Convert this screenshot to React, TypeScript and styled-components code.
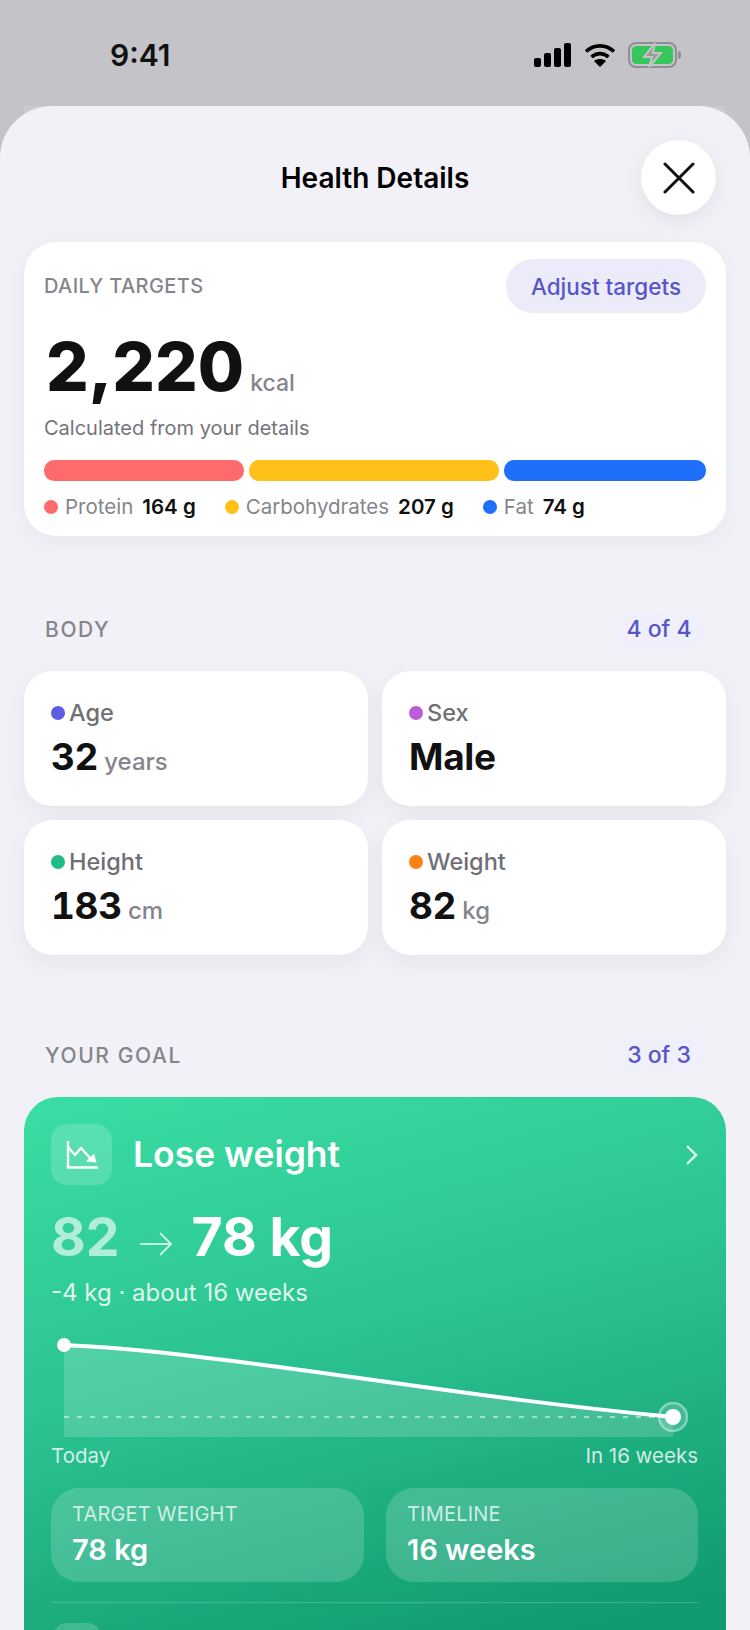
import React from "react";
import styled, { createGlobalStyle } from "styled-components";

const GlobalStyle = createGlobalStyle`
  html, body {
    margin: 0;
    padding: 0;
    background: #c4c3c8;
  }
  * {
    box-sizing: border-box;
  }
`;

const Page = styled.div`
  width: 750px;
  height: 1630px;
  overflow: hidden;
  isolation: isolate;
  background: #c4c3c8;
  font-family: Inter, "Liberation Sans", sans-serif;
  color: #111;
`;

const StatusBar = styled.div`
  height: 106px;
  padding: 36px 68px 0 110px;
  display: flex;
  justify-content: space-between;
  align-items: flex-start;
`;

const Clock = styled.div`
  font-size: 30px;
  line-height: 38px;
  font-weight: 600;
`;

const StatusIcons = styled.div`
  display: flex;
  align-items: center;
  gap: 12px;
  padding-top: 6px;
`;

const Sheet = styled.div`
  position: relative;
  height: 1524px;
  background: #f1f1f7;
  border-radius: 52px 52px 0 0;
  padding: 0 24px;

  /* the page behind the sheet peeks out at its corners */
  &::before {
    content: "";
    position: absolute;
    z-index: -1;
    top: 0;
    left: 24px;
    right: 24px;
    height: 40px;
    background: #cbcbce;
  }
`;

const SheetHeader = styled.div`
  position: relative;
  height: 136px;
  display: flex;
  align-items: center;
  justify-content: center;
  padding-top: 8px;
`;

const SheetTitle = styled.h1`
  margin: 0;
  font-size: 28px;
  font-weight: 600;
  color: #000;
`;

const CloseButton = styled.button`
  position: absolute;
  top: 34px;
  right: 10px;
  width: 75px;
  height: 75px;
  border: none;
  border-radius: 50%;
  background: #fff;
  box-shadow: 0 6px 20px rgba(40, 40, 70, 0.08);
  display: flex;
  align-items: center;
  justify-content: center;
  padding: 0;
`;

const Card = styled.section`
  height: 294px;
  background: #fff;
  border-radius: 32px;
  padding: 17px 20px 0 20px;
  box-shadow: 0 6px 20px rgba(40, 40, 70, 0.05);
`;

const CardTop = styled.div`
  display: flex;
  justify-content: space-between;
  align-items: center;
`;

const Overline = styled.div`
  font-size: 20px;
  font-weight: 500;
  letter-spacing: 0.4px;
  color: #85858c;
`;

const SectionLabel = styled(Overline)`
  font-size: 21px;
  letter-spacing: 1.6px;
`;

const AdjustButton = styled.button`
  height: 54px;
  width: 200px;
  border: none;
  border-radius: 27px;
  background: #ebebfa;
  color: #5856c8;
  font-family: inherit;
  font-size: 22.5px;
  font-weight: 500;
  padding: 0;
`;

const CalorieRow = styled.div`
  display: flex;
  align-items: baseline;
  gap: 6px;
  margin-top: 14px;
  padding-left: 2px;
`;

const CalorieValue = styled.span`
  font-size: 67px;
  line-height: 80px;
  font-weight: 800;
  color: #111;
`;

const CalorieUnit = styled.span`
  font-size: 23px;
  font-weight: 500;
  color: #85858c;
`;

const Caption = styled.div`
  margin-top: 8px;
  font-size: 20px;
  line-height: 26px;
  color: #74747a;
`;

const MacroBar = styled.div`
  display: flex;
  gap: 5px;
  margin-top: 19px;
`;

const MacroSegment = styled.div<{ $color: string; $grow: number }>`
  height: 21px;
  border-radius: 10px;
  background: ${(p) => p.$color};
  flex: ${(p) => p.$grow} 0 0;
`;

const Legend = styled.div`
  display: flex;
  gap: 29px;
  margin-top: 13px;
`;

const LegendItem = styled.div`
  display: flex;
  align-items: center;
  font-size: 20.5px;
  line-height: 26px;
`;

const Dot = styled.i<{ $color: string }>`
  display: block;
  width: 14px;
  height: 14px;
  border-radius: 50%;
  background: ${(p) => p.$color};
  flex: none;
`;

const LegendName = styled.span`
  margin-left: 7px;
  color: #85858c;
`;

const LegendValue = styled.b`
  margin-left: 9px;
  font-weight: 600;
  color: #111;
`;

const SectionHead = styled.div<{ $top: number }>`
  display: flex;
  justify-content: space-between;
  align-items: center;
  height: 34px;
  margin-top: ${(p) => p.$top}px;
  padding-left: 21px;
`;

const Progress = styled.div`
  height: 34px;
  width: 88px;
  margin-right: 23px;
  border-radius: 12px;
  background: #eff0fb;
  color: #5856c8;
  font-size: 23px;
  font-weight: 500;
  line-height: 34px;
  text-align: center;
`;

const TileGrid = styled.div`
  display: grid;
  grid-template-columns: 344px 344px;
  gap: 14px;
  margin-top: 25px;
`;

const Tile = styled.div`
  height: 135px;
  background: #fff;
  border-radius: 28px;
  padding: 27px 27px 0;
  box-shadow: 0 8px 22px rgba(40, 40, 70, 0.06);
`;

const TileLabel = styled.div`
  display: flex;
  align-items: center;
  gap: 4px;
  font-size: 23.5px;
  line-height: 30px;
  font-weight: 500;
  color: #6f6f75;
`;

const TileValue = styled.div`
  display: flex;
  align-items: baseline;
  gap: 6px;
  margin-top: 6px;
  font-size: 37px;
  line-height: 46px;
  font-weight: 700;
  letter-spacing: -0.3px;
  font-variant-numeric: tabular-nums;
  color: #111;
`;

const TileUnit = styled.span`
  font-size: 24px;
  font-weight: 500;
  letter-spacing: 0;
  color: #85858c;
`;

const GoalCard = styled.section`
  height: 700px;
  margin-top: 25px;
  border-radius: 34px 34px 0 0;
  padding: 27px 28px 0 27px;
  color: #fff;
  background: linear-gradient(165deg, #3adea3 0%, #2cc492 35%, #109a6f 78%);
`;

const GoalHead = styled.div`
  display: flex;
  align-items: center;
`;

const GoalIcon = styled.div`
  width: 61px;
  height: 61px;
  border-radius: 16px;
  background: rgba(255, 255, 255, 0.17);
  display: flex;
  align-items: center;
  justify-content: center;
`;

const GoalTitle = styled.div`
  margin-left: 21px;
  flex: 1;
  font-size: 35.5px;
  font-weight: 600;
`;

const WeightRow = styled.div`
  display: flex;
  align-items: baseline;
  margin-top: 19px;
  font-size: 53.5px;
  line-height: 66px;
  font-weight: 700;
`;

const WeightFrom = styled.span`
  color: rgba(255, 255, 255, 0.62);
`;

const WeightArrow = styled.svg`
  margin: 0 20px;
`;

const GoalSub = styled.div`
  margin-top: 8px;
  font-size: 24px;
  line-height: 30px;
  color: rgba(255, 255, 255, 0.85);
`;

const ChartSvg = styled.svg`
  display: block;
  margin: 28px 0 0 -3px;
`;

const ChartLabels = styled.div`
  display: flex;
  justify-content: space-between;
  margin-top: 4px;
  font-size: 20.5px;
  line-height: 26px;
  color: rgba(255, 255, 255, 0.8);
`;

const StatGrid = styled.div`
  display: grid;
  grid-template-columns: 313px 312px;
  gap: 22px;
  margin-top: 19px;
`;

const Stat = styled.div`
  height: 94px;
  border-radius: 28px;
  background: rgba(255, 255, 255, 0.17);
  padding: 13px 21px 0;
`;

const StatLabel = styled.div`
  font-size: 20px;
  line-height: 26px;
  letter-spacing: 0.2px;
  color: rgba(255, 255, 255, 0.75);
`;

const StatValue = styled.div`
  margin-top: 5px;
  font-size: 29px;
  line-height: 36px;
  font-weight: 600;
`;

const GoalDivider = styled.div`
  height: 1px;
  margin-top: 20px;
  background: rgba(255, 255, 255, 0.18);
`;

const NextIcon = styled.div`
  width: 46px;
  height: 46px;
  margin: 20px 0 0 3px;
  border-radius: 12px;
  background: rgba(255, 255, 255, 0.17);
`;

const tiles = [
  { label: "Age", color: "#5e5ce0", value: "32", unit: "years" },
  { label: "Sex", color: "#bf5ad8", value: "Male", unit: "" },
  { label: "Height", color: "#1ebd86", value: "183", unit: "cm" },
  { label: "Weight", color: "#fb8114", value: "82", unit: "kg" },
];

function App() {
  return (
    <Page>
      <GlobalStyle />
      <StatusBar>
        <Clock>9:41</Clock>
        <StatusIcons>
          <svg width="38" height="24" viewBox="0 0 38 24" fill="#000">
            <rect x="0" y="15" width="7" height="9" rx="2" />
            <rect x="10" y="10" width="7" height="14" rx="2" />
            <rect x="20" y="5" width="7" height="19" rx="2" />
            <rect x="30" y="0" width="7" height="24" rx="2" />
          </svg>
          <svg width="32" height="24" viewBox="0 0 32 24" fill="none" stroke="#000" strokeWidth="3.6">
            <path d="M2 8.5C10 1 22 1 30 8.5" />
            <path d="M7.5 14C12.5 9.5 19.5 9.5 24.5 14" />
            <path d="M16 24l-6-6c3.5-2.6 8.5-2.6 12 0z" fill="#000" stroke="none" />
          </svg>
          <svg width="54" height="26" viewBox="0 0 54 26">
            <rect x="1" y="1" width="47" height="24" rx="7" fill="none" stroke="#8f8f92" strokeWidth="2" />
            <rect x="4" y="4" width="41" height="18" rx="4.5" fill="#35c759" />
            <path d="M50 9c2.5 0 3 2 3 4s-.5 4-3 4z" fill="#8f8f92" />
            <path d="M27 1 16 15h8l-3 10 12-14h-8z" fill="#9b9b9e" stroke="#c4c3c8" strokeWidth="2" />
          </svg>
        </StatusIcons>
      </StatusBar>
      <Sheet>
        <SheetHeader>
          <SheetTitle>Health Details</SheetTitle>
          <CloseButton aria-label="Close">
            <svg width="32" height="32" viewBox="0 0 32 32" stroke="#111" strokeWidth="3" strokeLinecap="round">
              <path d="M2 2 30 30M30 2 2 30" />
            </svg>
          </CloseButton>
        </SheetHeader>

        <Card>
          <CardTop>
            <Overline>DAILY TARGETS</Overline>
            <AdjustButton>Adjust targets</AdjustButton>
          </CardTop>
          <CalorieRow>
            <CalorieValue>2,220</CalorieValue>
            <CalorieUnit>kcal</CalorieUnit>
          </CalorieRow>
          <Caption>Calculated from your details</Caption>
          <MacroBar>
            <MacroSegment $color="#ff6b6b" $grow={199} />
            <MacroSegment $color="#fdc11a" $grow={250} />
            <MacroSegment $color="#1f6ffb" $grow={201} />
          </MacroBar>
          <Legend>
            <LegendItem>
              <Dot $color="#ff6b6b" />
              <LegendName>Protein</LegendName>
              <LegendValue>164 g</LegendValue>
            </LegendItem>
            <LegendItem>
              <Dot $color="#fdc11a" />
              <LegendName>Carbohydrates</LegendName>
              <LegendValue>207 g</LegendValue>
            </LegendItem>
            <LegendItem>
              <Dot $color="#1f6ffb" />
              <LegendName>Fat</LegendName>
              <LegendValue>74 g</LegendValue>
            </LegendItem>
          </Legend>
        </Card>

        <SectionHead $top={76}>
          <SectionLabel>BODY</SectionLabel>
          <Progress>4 of 4</Progress>
        </SectionHead>
        <TileGrid>
          {tiles.map((t) => (
            <Tile key={t.label}>
              <TileLabel>
                <Dot $color={t.color} />
                {t.label}
              </TileLabel>
              <TileValue>
                {t.value}
                {t.unit && <TileUnit>{t.unit}</TileUnit>}
              </TileValue>
            </Tile>
          ))}
        </TileGrid>

        <SectionHead $top={83}>
          <SectionLabel>YOUR GOAL</SectionLabel>
          <Progress>3 of 3</Progress>
        </SectionHead>
        <GoalCard>
          <GoalHead>
            <GoalIcon>
              <svg width="32" height="28" viewBox="0 0 32 28" fill="none" stroke="#fff" strokeWidth="2.4">
                <path d="M2 0V26.5H32" />
                <path d="M2 6 9 14l6-7 9 10" />
                <path d="M30.5 21.5 20 20.5 28 12.5z" fill="#fff" stroke="none" />
              </svg>
            </GoalIcon>
            <GoalTitle>Lose weight</GoalTitle>
            <svg width="13" height="20" viewBox="0 0 13 20" fill="none" stroke="rgba(255,255,255,.85)" strokeWidth="2.4">
              <path d="M2 1l9 9-9 9" />
            </svg>
          </GoalHead>
          <WeightRow>
            <WeightFrom>82</WeightFrom>
            <WeightArrow width="32" height="24" viewBox="0 0 32 24" fill="none" stroke="rgba(255,255,255,.7)" strokeWidth="2">
              <path d="M0 12H31M20 1l11 11-11 11" />
            </WeightArrow>
            <span>78 kg</span>
          </WeightRow>
          <GoalSub>-4 kg · about 16 weeks</GoalSub>
          <ChartSvg width="660" height="103" viewBox="0 0 660 103">
            <path d="M16 9C90 12 190 25 311 42S520 71 625 81V101H16Z" fill="rgba(255,255,255,.17)" />
            <path d="M16 81H625" stroke="rgba(255,255,255,.5)" strokeWidth="2" strokeDasharray="5 8" />
            <path d="M16 9C90 12 190 25 311 42S520 71 625 81" fill="none" stroke="#fff" strokeWidth="4" />
            <circle cx="16" cy="9" r="7" fill="#fff" />
            <circle cx="625" cy="81" r="14" fill="rgba(255,255,255,.15)" stroke="rgba(255,255,255,.4)" strokeWidth="2.5" />
            <circle cx="625" cy="81" r="8" fill="#fff" />
          </ChartSvg>
          <ChartLabels>
            <span>Today</span>
            <span>In 16 weeks</span>
          </ChartLabels>
          <StatGrid>
            <Stat>
              <StatLabel>TARGET WEIGHT</StatLabel>
              <StatValue>78 kg</StatValue>
            </Stat>
            <Stat>
              <StatLabel>TIMELINE</StatLabel>
              <StatValue>16 weeks</StatValue>
            </Stat>
          </StatGrid>
          <GoalDivider />
          <NextIcon />
        </GoalCard>
      </Sheet>
    </Page>
  );
}

export default App;
